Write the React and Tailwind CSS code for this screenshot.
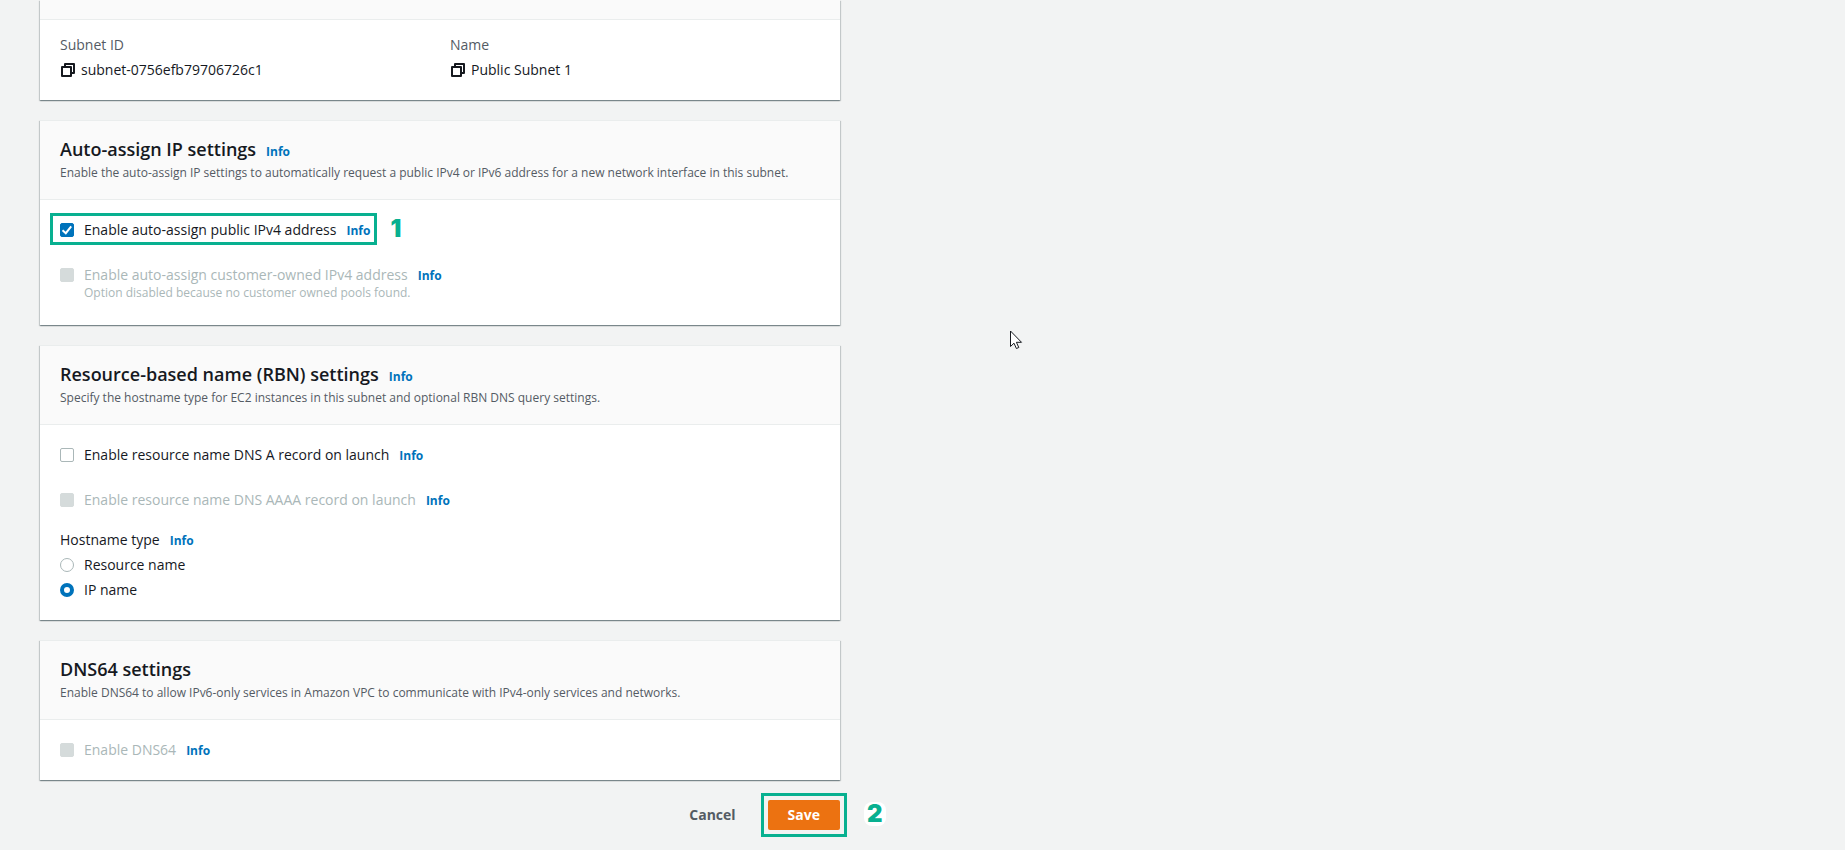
import React, { useState } from "react";

function CopyIcon() {
    return (
        <svg width="16" height="16" viewBox="0 0 16 16" fill="none" stroke="currentColor" strokeWidth="2" strokeLinejoin="round" aria-hidden="true">
            <path d="M2 5h9v9H2z" />
            <path d="M5 5V2h9v9h-3" />
        </svg>
    );
}

function Info() {
    return <a href="#info" className="ml-[10px] text-xs font-bold text-[#0073bb]">Info</a>;
}

function CopyButton({ label }) {
    return <button type="button" aria-label={label} className="mr-[5px]"><CopyIcon /></button>;
}

// green frame drawn round the control of a tutorial step
function Highlight({ className }) {
    return <span className={"pointer-events-none absolute border-3 border-[#08b090] " + className} />;
}

function Card({ title, info, description, children }) {
    return (
        <section className="border-t border-[#eaeded] bg-white shadow-[0_1px_1px_0_rgba(0,28,36,0.3),1px_1px_1px_0_rgba(0,28,36,0.15),-1px_1px_1px_0_rgba(0,28,36,0.15)]">
            <header className="border-b border-[#eaeded] bg-[#fafafa] px-5 py-[17px]">
                <h2 className="text-lg leading-[22px] font-semibold">{title}{info && <Info />}</h2>
                <p className="mt-1 text-xs leading-[18px] text-[#545b64]">{description}</p>
            </header>
            <div className="px-5 py-[19px]">{children}</div>
        </section>
    );
}

function Checkbox({ id, label, description, checked, onChange, disabled }) {
    return (
        <div className="flex items-start gap-[10px]">
            <span className="mt-1 grid size-[14px] shrink-0">
                <input
                    id={id}
                    type="checkbox"
                    checked={checked}
                    onChange={onChange}
                    disabled={disabled}
                    className="col-start-1 row-start-1 size-[14px] appearance-none rounded-xs border border-[#aab7b8] bg-white checked:border-[#0073bb] checked:bg-[#0073bb] disabled:border-[#d5dbdb] disabled:bg-[#d5dbdb]"
                />
                {checked && (
                    <svg className="pointer-events-none col-start-1 row-start-1" width="14" height="14" viewBox="0 0 14 14" fill="none" stroke="#fff" strokeWidth="2">
                        <path d="M2.5 7.2 5.8 10.2 11.2 3.4" />
                    </svg>
                )}
            </span>
            <div>
                <div className={disabled ? "text-[#aab7b8]" : ""}>
                    <label htmlFor={id}>{label}</label>
                    <Info />
                </div>
                {description && <p className="pb-[6px] text-xs leading-[14px] text-[#aab7b8]">{description}</p>}
            </div>
        </div>
    );
}

function Radio({ id, label, checked, onChange }) {
    return (
        <div className="flex items-center gap-[10px]">
            <input
                id={id}
                type="radio"
                name="hostname"
                checked={checked}
                onChange={onChange}
                className="size-[14px] appearance-none rounded-full border border-[#aab7b8] bg-white checked:border-4 checked:border-[#0073bb]"
            />
            <label htmlFor={id}>{label}</label>
        </div>
    );
}

export default function App() {
    const [ipv4, setIpv4] = useState(true);
    const [dnsA, setDnsA] = useState(false);
    const [hostname, setHostname] = useState("ip");

    return (
        <div className="relative min-h-screen bg-[#f2f3f3] px-10 font-['Open_Sans',sans-serif] text-sm leading-[22px] text-[#16191f]">
            <main className="flex max-w-[800px] flex-col gap-5">
                <section className="bg-white shadow-[0_1px_1px_0_rgba(0,28,36,0.3),1px_1px_1px_0_rgba(0,28,36,0.15),-1px_1px_1px_0_rgba(0,28,36,0.15)]">
                    <div className="h-5 border-b border-[#eaeded] bg-[#fafafa]" />
                    <dl className="grid grid-cols-2 gap-5 px-5 pt-[14px] pb-[19px]">
                        <div>
                            <dt className="text-[#545b64]">Subnet ID</dt>
                            <dd className="mt-[3px] flex items-center"><CopyButton label="Copy subnet ID" />subnet-0756efb79706726c1</dd>
                        </div>
                        <div>
                            <dt className="text-[#545b64]">Name</dt>
                            <dd className="mt-[3px] flex items-center"><CopyButton label="Copy name" />Public Subnet 1</dd>
                        </div>
                    </dl>
                </section>

                <Card
                    title="Auto-assign IP settings"
                    info
                    description="Enable the auto-assign IP settings to automatically request a public IPv4 or IPv6 address for a new network interface in this subnet."
                >
                    <div className="flex flex-col gap-[23px]">
                        <div className="flex">
                            <div className="relative">
                                <Checkbox id="ipv4" label="Enable auto-assign public IPv4 address" checked={ipv4} onChange={() => setIpv4(!ipv4)} />
                                <Highlight className="-top-[6px] -right-[7px] -bottom-1 -left-[10px]" />
                            </div>
                            <span className="ml-5 font-['Inter',sans-serif] text-2xl leading-5 font-black text-[#08b090]">1</span>
                        </div>
                        <Checkbox id="coip" label="Enable auto-assign customer-owned IPv4 address" description="Option disabled because no customer owned pools found." disabled />
                    </div>
                </Card>

                <Card
                    title="Resource-based name (RBN) settings"
                    info
                    description="Specify the hostname type for EC2 instances in this subnet and optional RBN DNS query settings."
                >
                    <div className="flex flex-col gap-[23px]">
                        <Checkbox id="dns-a" label="Enable resource name DNS A record on launch" checked={dnsA} onChange={() => setDnsA(!dnsA)} />
                        <Checkbox id="dns-aaaa" label="Enable resource name DNS AAAA record on launch" disabled />
                    </div>
                    <fieldset className="mt-[18px] flex flex-col gap-[3px]">
                        <legend className="mb-[3px]">Hostname type<Info /></legend>
                        <Radio id="host-resource" label="Resource name" checked={hostname === "resource"} onChange={() => setHostname("resource")} />
                        <Radio id="host-ip" label="IP name" checked={hostname === "ip"} onChange={() => setHostname("ip")} />
                    </fieldset>
                </Card>

                <Card
                    title="DNS64 settings"
                    description="Enable DNS64 to allow IPv6-only services in Amazon VPC to communicate with IPv4-only services and networks."
                >
                    <Checkbox id="dns64" label="Enable DNS64" disabled />
                </Card>

                <div className="flex items-center justify-end">
                    <button type="button" className="mr-3 h-[30px] px-5 font-bold text-[#545b64]">Cancel</button>
                    <div className="relative">
                        <button type="button" className="h-[30px] rounded-xs bg-[#ec7211] px-5 font-bold text-white">Save</button>
                        <Highlight className="-inset-[7px]" />
                        <span className="absolute top-[2px] left-full ml-6 rounded-lg bg-white px-[3px] font-['Inter',sans-serif] text-2xl leading-6 font-black text-[#08b090]">2</span>
                    </div>
                </div>
            </main>

            {/* mouse pointer */}
            <svg className="pointer-events-none absolute top-[330px] left-[1010px]" width="13" height="20" viewBox="0 0 13 20" fill="#fff" stroke="#16191f">
                <path d="M.5 1v15.5l3.5-3.3 2.4 5.3 2.4-1-2.4-5.2h5.1z" />
            </svg>
        </div>
    );
}
